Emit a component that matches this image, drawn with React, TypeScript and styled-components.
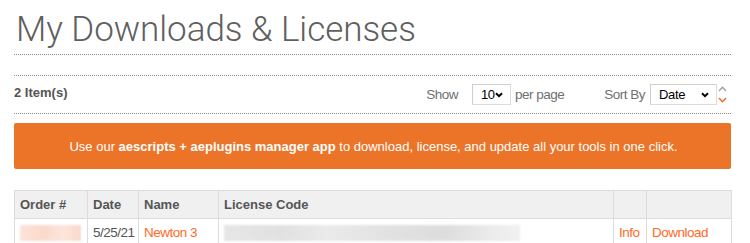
import React from "react";
import styled, { createGlobalStyle } from "styled-components";

const Global = createGlobalStyle`
  html, body { margin: 0; padding: 0; background: #fff; }
  body { font-family: "Liberation Sans", Arial, sans-serif; }
`;

const Page = styled.div`
  width: 717px;
  margin-left: 14px;
`;

const Title = styled.h1`
  margin: 0;
  padding: 9px 0 3px 2px;
  font-family: Roboto, "DejaVu Sans", sans-serif;
  font-weight: 300;
  font-size: 35px;
  line-height: 42px;
  color: #5f5f5f;
  letter-spacing: -0.05px;
  border-bottom: 1px dotted #8a8a8a;
`;

const Toolbar = styled.div`
  margin-top: 20px;
  height: 37px;
  padding-right: 4px;
  border-top: 1px dotted #8a8a8a;
  border-bottom: 1px dotted #8a8a8a;
  display: flex;
  align-items: center;
  font-size: 13.5px;
  letter-spacing: -0.5px;
  color: #666;
`;

const Count = styled.div`
  font-weight: bold;
  font-size: 13px;
  letter-spacing: 0;
  color: #555;
  flex: 1;
  padding-bottom: 4px;
`;

const Control = styled.div<{ $mr?: number }>`
  display: flex;
  align-items: center;
  gap: 4px;
  margin-right: ${(p) => p.$mr ?? 0}px;
`;

const Label = styled.span<{ $mr?: number }>`
  color: #707070;
  margin-right: ${(p) => p.$mr ?? 0}px;
`;

const SelectBox = styled.div<{ $w: number }>`
  width: ${(p) => p.$w}px;
  height: 21px;
  box-sizing: border-box;
  border: 1px solid #dcdcdc;
  border-top-color: #cfcfcf;
  border-left-color: #cfcfcf;
  background: #fff;
  display: flex;
  align-items: center;
  justify-content: space-between;
  padding: 0 7px 0 8px;
  color: #000;
  font-size: 13px;
  letter-spacing: -0.3px;
`;

const SortArrows = styled.div`
  display: flex;
  flex-direction: column;
  gap: 5px;
  margin-left: -3px;
  padding-bottom: 1px;
`;

const Banner = styled.div`
  margin-top: 9px;
  height: 46px;
  background: #ec7428;
  border-radius: 2px;
  display: flex;
  align-items: center;
  justify-content: center;
  color: #fff;
  font-size: 13px;
  padding-left: 2px;
  b { font-weight: bold; }
`;

const Table = styled.table`
  margin-top: 21px;
  width: 717px;
  border-collapse: collapse;
  table-layout: fixed;
  font-size: 13.5px;
  color: #555;
`;

const Th = styled.th`
  background: #f0f0f0;
  border: 1px solid #dcdcdc;
  height: 27px;
  padding: 0 5px;
  text-align: left;
  font-weight: bold;
  font-size: 13px;
  color: #555;
`;

const Td = styled.td`
  border: 1px solid #dcdcdc;
  height: 27px;
  padding: 0 5px;
  text-align: left;
  letter-spacing: -0.5px;
`;

const Link = styled.span`
  color: #ff6a1f;
`;

const Blur = styled.div<{ $w: number; $c: string }>`
  width: ${(p) => p.$w}px;
  height: 16px;
  background: ${(p) => p.$c};
  filter: blur(1px);
`;

const Chevron = () => (
  <svg width="8" height="6" viewBox="0 0 8 6">
    <path d="M1 1.2 L4 4.2 L7 1.2" fill="none" stroke="#000" strokeWidth="2" />
  </svg>
);

const SmallArrow = ({ up, color }: { up?: boolean; color: string }) => (
  <svg width="9" height="6" viewBox="0 0 9 6">
    <path
      d={up ? "M1 5 L4.5 1.2 L8 5" : "M1 1 L4.5 4.8 L8 1"}
      fill="none"
      stroke={color}
      strokeWidth="1.4"
    />
  </svg>
);

export default function App() {
  return (
    <>
      <Global />
      <Page>
        <Title>My Downloads &amp; Licenses</Title>
        <Toolbar>
          <Count>2 Item(s)</Count>
          <Control $mr={40}>
            <Label $mr={10}>Show</Label>
            <SelectBox $w={39}>
              <span>10</span>
              <Chevron />
            </SelectBox>
            <Label>per page</Label>
          </Control>
          <Control>
            <Label $mr={1}>Sort By</Label>
            <SelectBox $w={67}>
              <span>Date</span>
              <Chevron />
            </SelectBox>
            <SortArrows>
              <SmallArrow up color="#a0a0a0" />
              <SmallArrow color="#ee6a1f" />
            </SortArrows>
          </Control>
        </Toolbar>
        <Banner>
          <span>
            Use our <b>aescripts + aeplugins manager app</b> to download, license, and update all your tools in one click.
          </span>
        </Banner>
        <Table>
          <colgroup>
            <col style={{ width: 73 }} />
            <col style={{ width: 51 }} />
            <col style={{ width: 80 }} />
            <col style={{ width: 395 }} />
            <col style={{ width: 33 }} />
            <col style={{ width: 85 }} />
          </colgroup>
          <thead>
            <tr>
              <Th>Order #</Th>
              <Th>Date</Th>
              <Th>Name</Th>
              <Th>License Code</Th>
              <Th></Th>
              <Th></Th>
            </tr>
          </thead>
          <tbody>
            <tr>
              <Td>
                <Blur $w={61} $c="linear-gradient(90deg,#fde3d8,#fbd9cc 40%,#fde6dc 70%,#fad8cb)" />
              </Td>
              <Td>5/25/21</Td>
              <Td>
                <Link>Newton 3</Link>
              </Td>
              <Td>
                <Blur $w={296} $c="linear-gradient(90deg,#e6e6e6,#e1e1e1 20%,#eaeaea 35%,#e2e2e2 55%,#dddddd 75%,#ebebeb 90%,#f1f1f1)" />
              </Td>
              <Td>
                <Link>Info</Link>
              </Td>
              <Td>
                <Link>Download</Link>
              </Td>
            </tr>
          </tbody>
        </Table>
      </Page>
    </>
  );
}
